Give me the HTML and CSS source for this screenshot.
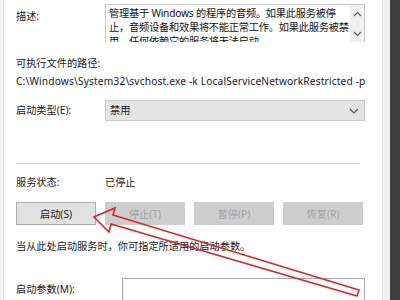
FILE: index.html
```html
<!DOCTYPE html>
<html lang="zh-CN">
<head>
    <meta charset="UTF-8">
    <title>服务属性</title>
    <link rel="stylesheet" href="styles.css">
</head>
<body>
    <div class="window">
        <div class="edge-left"></div>
        <div class="panel">
            <div class="row desc-row">
                <span class="label">描述:</span>
                <div class="desc-box">
                    <div class="desc-text">
                        <div>管理基于 Windows 的程序的音频。如果此服务被停</div>
                        <div>止，音频设备和效果将不能正常工作。如果此服务被禁</div>
                        <div>用，任何依赖它的服务将无法启动。</div>
                    </div>
                    <div class="scrollbar">
                        <svg width="9" height="6" viewBox="0 0 9 6"><path d="M1 5 L4.5 1.5 L8 5" fill="none" stroke="#606060" stroke-width="1.2"/></svg>
                        <svg width="9" height="6" viewBox="0 0 9 6"><path d="M1 1 L4.5 4.5 L8 1" fill="none" stroke="#606060" stroke-width="1.2"/></svg>
                    </div>
                </div>
            </div>

            <div class="path-label">可执行文件的路径:</div>
            <div class="path-value">C:\Windows\System32\svchost.exe -k LocalServiceNetworkRestricted -p</div>

            <div class="row select-row">
                <span class="label">启动类型(E):</span>
                <div class="select">
                    <span>禁用</span>
                    <svg width="10" height="6" viewBox="0 0 10 6"><path d="M1 1 L5 5 L9 1" fill="none" stroke="#555" stroke-width="1.2"/></svg>
                </div>
            </div>

            <div class="separator"></div>

            <div class="row status-row">
                <span class="label">服务状态:</span>
                <span>已停止</span>
            </div>

            <div class="buttons">
                <button class="btn">启动(S)</button>
                <button class="btn" disabled>停止(T)</button>
                <button class="btn" disabled>暂停(P)</button>
                <button class="btn" disabled>恢复(R)</button>
            </div>

            <div class="hint">当从此处启动服务时，你可指定所适用的启动参数。</div>

            <div class="row param-row">
                <span class="label param-label">启动参数(M):</span>
                <div class="param-input"></div>
            </div>
        </div>
        <div class="gutter"></div>
        <div class="dark-side"></div>

        <svg class="arrow" width="400" height="300" viewBox="0 0 400 300">
            <path d="M94 217 L115 208 L113 215 L359 290 L357 296 L111 224 L109 232 Z" fill="none" stroke="#d9252a" stroke-width="1.6" stroke-linejoin="miter"/>
        </svg>
    </div>
</body>
</html>
```

FILE: styles.css
```css
* {
    margin: 0;
    padding: 0;
    box-sizing: border-box;
}

body {
    font-family: "Noto Sans", "Noto Sans CJK SC", sans-serif;
    font-size: 10.2px;
    line-height: 15px;
    color: #1a1a1a;
    background: #fff;
    overflow: hidden;
}

.window {
    display: flex;
    width: 400px;
    height: 300px;
    position: relative;
    overflow: hidden;
}

.edge-left {
    width: 4px;
    background: #f3f3f3;
    border-right: 1px solid #e2e2e2;
}

.panel {
    flex: 1;
    padding-left: 12px;
    background: #fff;
}

.gutter {
    width: 8px;
    background: #f0f0f0;
    border-left: 1px solid #e4e4e4;
}

.dark-side {
    width: 10px;
    background: #3e3e3e;
}

.row {
    display: flex;
    align-items: center;
}

.label {
    width: 89px;
    flex-shrink: 0;
}

.desc-row {
    align-items: flex-start;
    padding-top: 4px;
}

.desc-row .label {
    padding-top: 5px;
}

.desc-box {
    width: 260px;
    height: 38px;
    border: 1px solid #c9c9c9;
    border-bottom: none;
    display: flex;
    overflow: hidden;
}

.desc-text {
    flex: 1;
    min-width: 0;
    padding: 1px 0 0 3px;
    line-height: 14px;
    color: #111;
    white-space: nowrap;
    overflow: hidden;
    letter-spacing: -0.2px;
}

.scrollbar {
    width: 14px;
    flex-shrink: 0;
    background: #f0f0f0;
    display: flex;
    flex-direction: column;
    justify-content: space-between;
    align-items: center;
    padding: 6px 0 5px;
}

.scrollbar svg {
    display: block;
}

.path-label {
    margin-top: 14px;
}

.path-value {
    margin-top: 3px;
    white-space: nowrap;
    letter-spacing: 0.15px;
}

.select-row {
    margin-top: 11px;
}

.select {
    width: 260px;
    height: 21px;
    background: #e4e4e4;
    border: 1px solid #cacaca;
    display: flex;
    align-items: center;
    justify-content: space-between;
    padding: 0 5px 0 4px;
}

.separator {
    margin-top: 42px;
    width: 344px;
    height: 1px;
    background: #d0d0d0;
}

.status-row {
    margin-top: 11px;
}

.buttons {
    display: flex;
    gap: 8px;
    margin-top: 12px;
}

.btn {
    width: 80px;
    height: 23px;
    font-family: inherit;
    font-size: 10.2px;
    color: #1a1a1a;
    background: #e1e1e1;
    border: 1px solid #adadad;
}

.btn:disabled {
    background: #cecece;
    border-color: #cecece;
    color: #a2a2a2;
}

.btn + .btn {
    margin-left: 1px;
}

.hint {
    margin-top: 14px;
}

.param-row {
    margin-top: 24px;
    align-items: flex-start;
}

.param-label {
    width: 106px;
    padding-top: 4px;
}

.param-input {
    width: 243px;
    height: 40px;
    border: 1px solid #a8a8a8;
}

.arrow {
    position: absolute;
    left: 0;
    top: 0;
    pointer-events: none;
}
```
